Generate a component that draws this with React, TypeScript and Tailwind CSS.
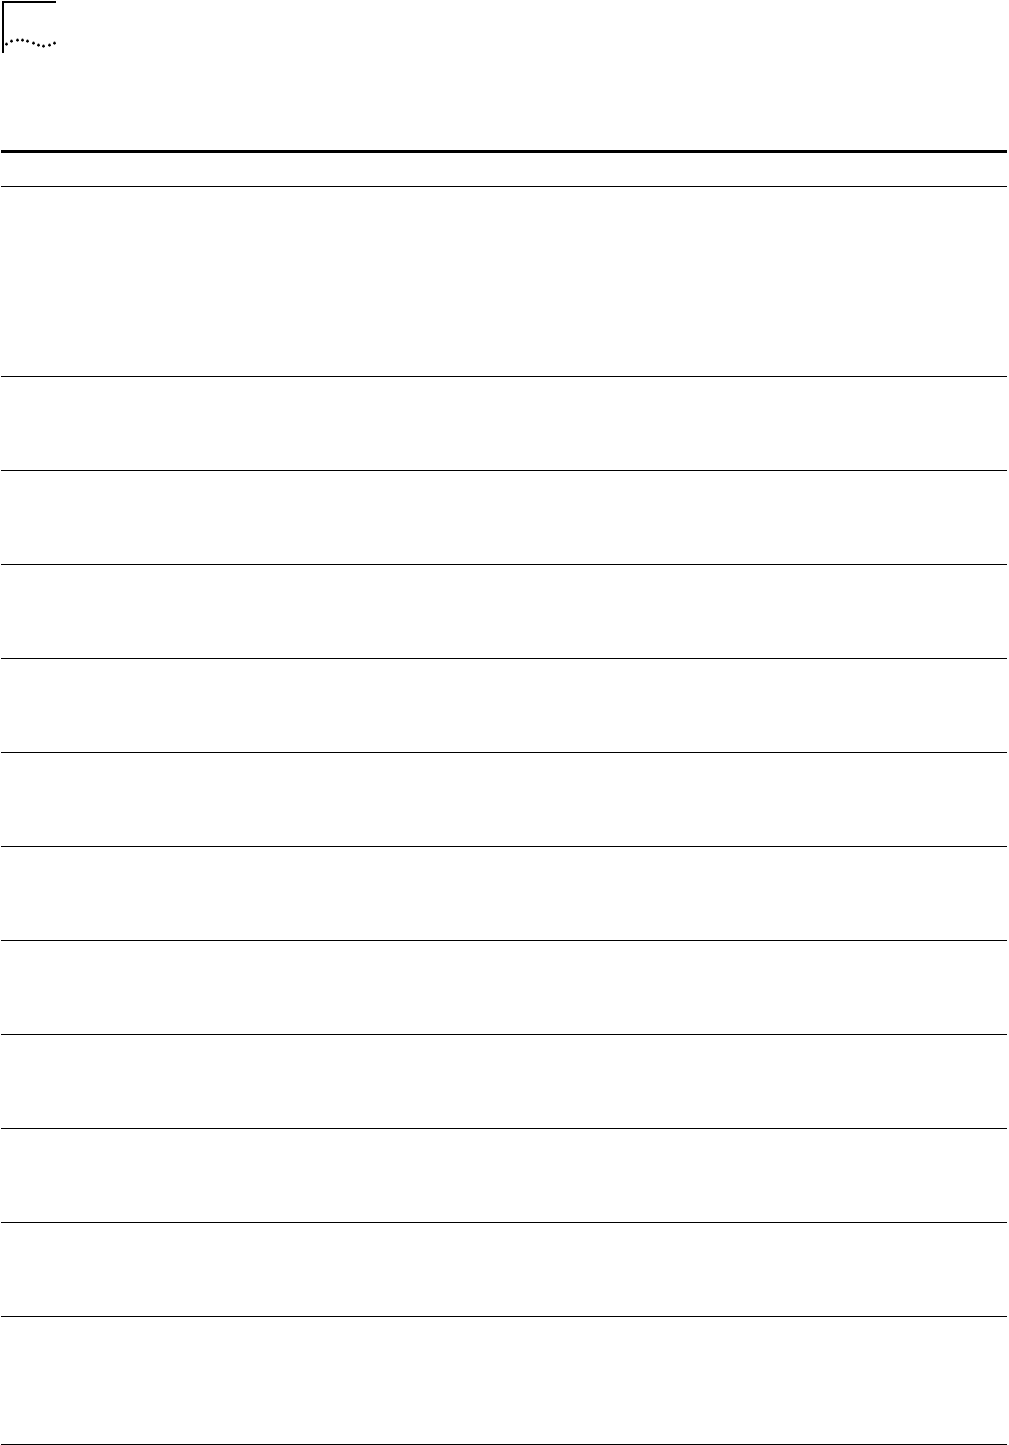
const rows = [189, 93, 93, 93, 93, 93, 93, 93, 93, 93, 93, 127];

const dots = [
  [6, 44], [11, 41], [17, 40], [22, 40], [27, 41],
  [33, 43], [38, 45], [43, 46], [49, 45], [54, 43],
];

const Mark = () => (
  <svg width="60" height="56" viewBox="0 0 60 56" className="block">
    <rect x="2" y="1" width="2" height="52" fill="#000" />
    <rect x="2" y="1" width="54" height="2" fill="#000" />
    {dots.map(([x, y], i) => (
      <g key={i} fill="#000">
        <rect x={x - 1} y={y - 0.5} width="3" height="1.4" />
        <rect x={x - 0.2} y={y - 1.4} width="1.4" height="3" />
      </g>
    ))}
  </svg>
);

const App = () => {
  return (
    <div className="w-[1009px] min-h-[1445px] bg-white">
      <div className="h-[150px]">
        <Mark />
      </div>
      <div className="ml-[1px] mr-[2px] h-[3px] bg-black" />
      <div className="h-[33px]" />
      <div className="ml-[1px] mr-[2px] h-px bg-black" />
      {rows.map((h, i) => (
        <div key={i}>
          <div style={{ height: h }} />
          <div className="ml-[1px] mr-[2px] h-px bg-black" />
        </div>
      ))}
    </div>
  );
};

export default App;
